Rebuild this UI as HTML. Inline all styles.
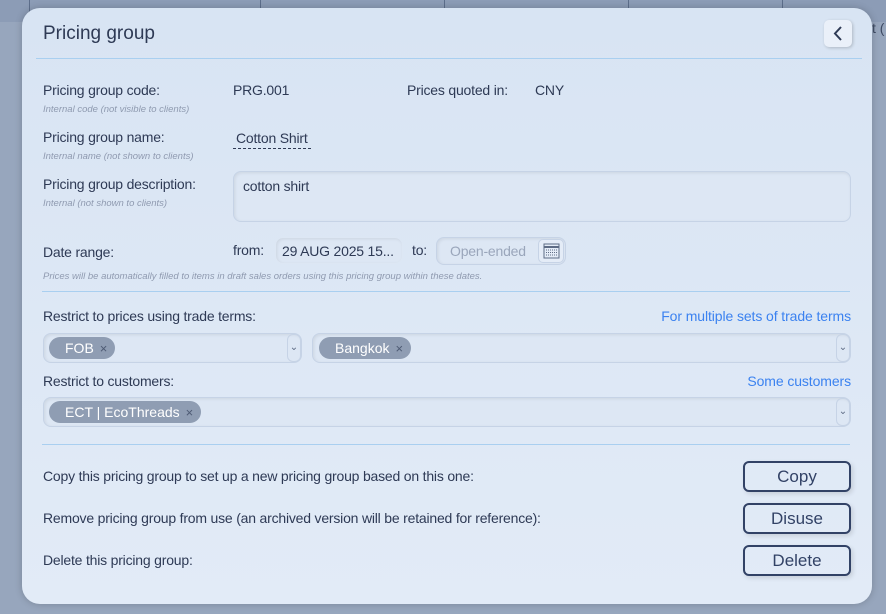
<!DOCTYPE html>
<html><head><style>
*{box-sizing:border-box;margin:0;padding:0}
body{width:886px;height:614px;overflow:hidden;background:#97a6bd;font-family:"Liberation Sans",sans-serif;color:#2e3a55;position:relative}
.top{position:absolute;left:0;top:0;width:886px;height:22px;background:#8c9cb6}
.vl{position:absolute;top:0;height:22px;width:1px;background:#5d6e8b}
.modal{position:absolute;left:22px;top:8px;width:850px;height:596px;border-radius:18px;background:linear-gradient(#d8e4f3,#e2ebf7);box-shadow:0 0 8px rgba(0,0,0,.2)}
.a{position:absolute;white-space:nowrap}
.l{font-size:14px;color:#2e3a55;letter-spacing:-0.2px}
.s{font-size:9.5px;font-style:italic;color:#8f9ab0}
.hr{position:absolute;left:20px;width:808px;height:1px;background:#a9cff0}
.box{position:absolute;border:1px solid #c6d3e6;background:#dde7f4;border-radius:8px;box-shadow:inset 1px 1px 3px rgba(0,0,0,.08)}
.tag{position:absolute;height:22px;border-radius:11px;background:#8f9db3;color:#fff;font-size:14px;line-height:22px;padding:0 8px 0 16px}
.tag b{font-weight:normal;color:#4e5b74;margin-left:6px;font-size:13px}
.btn{position:absolute;left:721px;width:108px;height:31px;border:2px solid #324266;border-radius:6px;font-size:17px;text-align:center;line-height:27px;color:#324266;box-shadow:2px 2px 5px rgba(0,0,0,.12)}
.dd{position:absolute;width:14px;height:28px;border:1px solid #c6d3e6;border-radius:6px;font-size:10px;text-align:center;line-height:26px;color:#5d6b84}
.link{position:absolute;font-size:14px;color:#3b82f0;letter-spacing:-0.1px;white-space:nowrap}
</style></head><body>
<div class="top"></div>
<div class="vl" style="left:29px"></div><div class="vl" style="left:260px"></div><div class="vl" style="left:444px"></div><div class="vl" style="left:628px"></div><div class="vl" style="left:782px"></div>
<div class="a" style="left:872px;top:20px;font-size:14px;color:#3d4a63">t (</div>
<div class="modal">
<div class="a" style="left:21px;top:15px;font-size:19px;color:#2e3a55">Pricing group</div>
<div class="a" style="left:802px;top:12px;width:28px;height:27px;border-radius:5px;background:#eaf0f9;box-shadow:1px 1px 3px rgba(0,0,0,.2)"><svg width="28" height="27"><path d="M17 7 L11 13.5 L17 20" fill="none" stroke="#2e3a55" stroke-width="2"/></svg></div>
<div class="hr" style="left:14px;width:826px;top:50px"></div>
<div class="a l" style="left:21px;top:74px">Pricing group code:</div>
<div class="a s" style="left:21px;top:96px">Internal code (not visible to clients)</div>
<div class="a l" style="left:211px;top:74px">PRG.001</div>
<div class="a l" style="left:385px;top:74px">Prices quoted in:</div>
<div class="a l" style="left:513px;top:74px">CNY</div>
<div class="a l" style="left:21px;top:121px">Pricing group name:</div>
<div class="a s" style="left:21px;top:143px">Internal name (not shown to clients)</div>
<div class="a l" style="left:211px;top:122px;padding:0 3px 2px;border-bottom:1px dashed #2e3a55">Cotton Shirt</div>
<div class="a l" style="left:21px;top:168px">Pricing group description:</div>
<div class="a s" style="left:21px;top:190px">Internal (not shown to clients)</div>
<div class="box" style="left:211px;top:163px;width:618px;height:51px"><span class="a l" style="left:9px;top:6px">cotton shirt</span></div>
<div class="a l" style="left:21px;top:236px">Date range:</div>
<div class="a l" style="left:211px;top:234px">from:</div>
<div class="box" style="left:253px;top:229px;width:128px;height:27px;border-color:#dde7f4"><span class="a l" style="left:6px;top:5px">29 AUG 2025 15...</span></div>
<div class="a l" style="left:390px;top:234px">to:</div>
<div class="box" style="left:414px;top:229px;width:130px;height:28px"><span class="a l" style="left:13px;top:5px;color:#9aa6bb">Open-ended</span></div>
<div class="a" style="left:516px;top:231px;width:26px;height:24px;border:1px solid #c6d3e6;border-radius:5px;background:#e4ecf7"><svg width="24" height="22"><rect x="5" y="4" width="15" height="14" fill="none" stroke="#5d6b84"/><line x1="5" y1="7" x2="20" y2="7" stroke="#5d6b84" stroke-width="2"/><path d="M7 10h11M7 12.5h11M7 15h11" stroke="#5d6b84" stroke-dasharray="1 1"/></svg></div>
<div class="a s" style="left:21px;top:263px">Prices will be automatically filled to items in draft sales orders using this pricing group within these dates.</div>
<div class="hr" style="top:283px"></div>
<div class="a l" style="left:21px;top:300px">Restrict to prices using trade terms:</div>
<div class="link" style="right:21px;top:300px">For multiple sets of trade terms</div>
<div class="box" style="left:21px;top:325px;width:259px;height:30px"></div>
<div class="tag" style="left:27px;top:329px">FOB<b>×</b></div>
<div class="dd" style="left:265px;top:326px">⌄</div>
<div class="box" style="left:290px;top:325px;width:539px;height:30px"></div>
<div class="tag" style="left:297px;top:329px">Bangkok<b>×</b></div>
<div class="dd" style="left:814px;top:326px">⌄</div>
<div class="a l" style="left:21px;top:365px">Restrict to customers:</div>
<div class="link" style="right:21px;top:365px">Some customers</div>
<div class="box" style="left:21px;top:389px;width:808px;height:30px"></div>
<div class="tag" style="left:27px;top:393px">ECT | EcoThreads<b>×</b></div>
<div class="dd" style="left:814px;top:390px">⌄</div>
<div class="hr" style="top:436px"></div>
<div class="a l" style="left:21px;top:460px">Copy this pricing group to set up a new pricing group based on this one:</div>
<div class="a l" style="left:21px;top:502px">Remove pricing group from use (an archived version will be retained for reference):</div>
<div class="a l" style="left:21px;top:544px">Delete this pricing group:</div>
<div class="btn" style="top:453px">Copy</div>
<div class="btn" style="top:495px">Disuse</div>
<div class="btn" style="top:537px">Delete</div>
</div>
</body></html>
